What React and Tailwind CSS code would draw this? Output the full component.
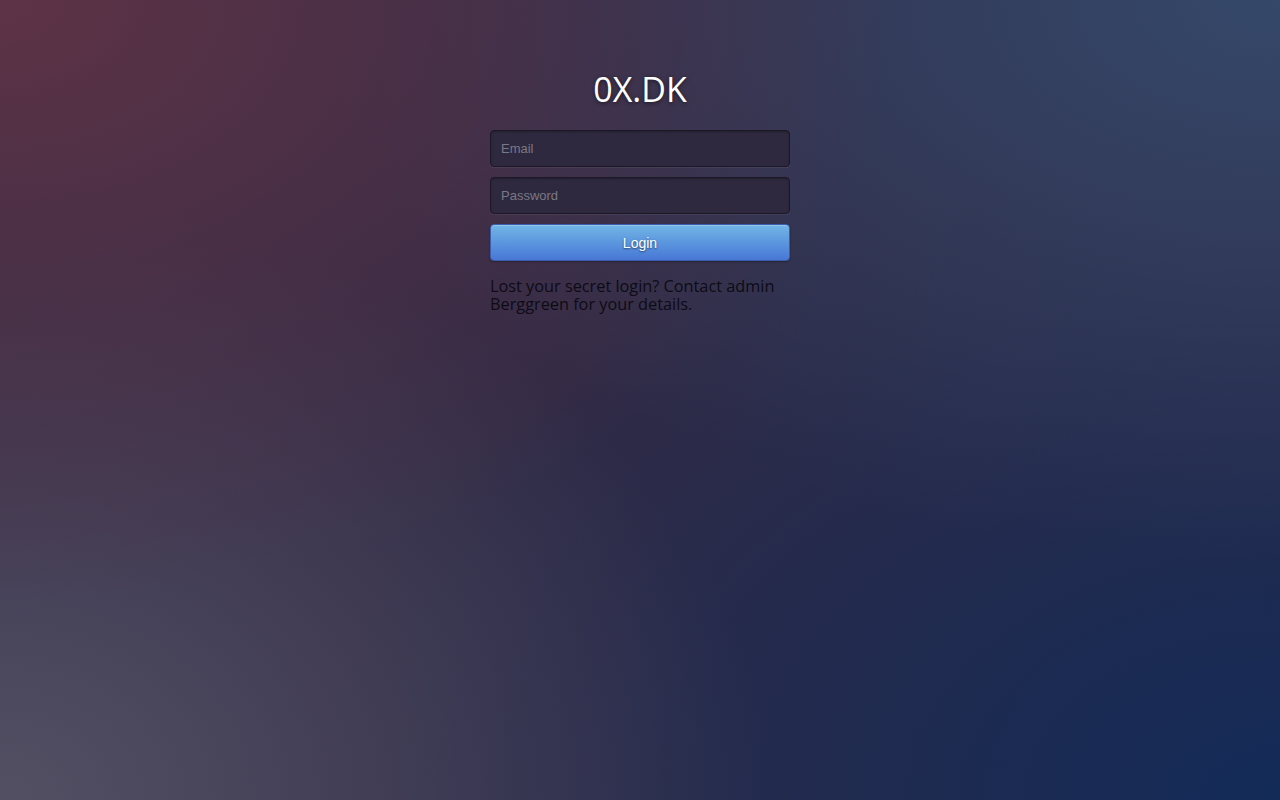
import React from 'react'

// Login screen for 0X.DK
export default function App() {
  return (
    <div className="relative min-h-[800px] w-full overflow-hidden bg-[#302a45] bg-[radial-gradient(ellipse_70%_75%_at_0%_0%,#5e3346_0%,rgba(94,51,70,0)_100%),radial-gradient(ellipse_75%_70%_at_100%_0%,#35486a_0%,rgba(53,72,106,0)_100%),radial-gradient(ellipse_60%_75%_at_0%_100%,#535064_0%,rgba(83,80,100,0)_100%),radial-gradient(ellipse_75%_80%_at_100%_100%,#132b58_0%,rgba(19,43,88,0)_100%)]">
      <div className="mx-auto flex w-[300px] flex-col pt-[68px]">
        <h1 className="text-center font-['Open_Sans',sans-serif] text-[34px] leading-[42px] font-medium text-white [text-shadow:0_1px_4px_rgba(0,0,0,0.6)]">
          0X.DK
        </h1>

        <form className="mt-[20px] flex flex-col gap-[10px]" onSubmit={(e) => e.preventDefault()}>
          <input
            type="email"
            placeholder="Email"
            className="h-[37px] w-full rounded-[4px] border border-[#1c1826] bg-[#2e293e] px-[10px] pb-px font-['Liberation_Sans',Arial,sans-serif] text-[13px] text-white shadow-[inset_0_1px_2px_rgba(0,0,0,0.25),0_1px_0_rgba(255,255,255,0.06)] outline-none placeholder:text-[#7b7885]"
          />
          <input
            type="password"
            placeholder="Password"
            className="h-[37px] w-full rounded-[4px] border border-[#1c1826] bg-[#2e293e] px-[10px] pb-px font-['Liberation_Sans',Arial,sans-serif] text-[13px] text-white shadow-[inset_0_1px_2px_rgba(0,0,0,0.25),0_1px_0_rgba(255,255,255,0.06)] outline-none placeholder:text-[#7b7885]"
          />
          <button
            type="submit"
            className="h-[37px] w-full rounded-[4px] border border-[#3a5ead] bg-gradient-to-b from-[#72b5e6] to-[#4877d5] pt-[2px] font-['Liberation_Sans',Arial,sans-serif] text-[14px] text-white shadow-[inset_0_1px_0_rgba(255,255,255,0.25),0_1px_2px_rgba(0,0,0,0.3)] [text-shadow:0_1px_2px_rgba(0,0,0,0.55)]"
          >
            Login
          </button>
        </form>

        <p className="mt-[16px] font-['Open_Sans',sans-serif] text-[16.3px] leading-[18px] text-[#0d0b14]">
          Lost your secret login? Contact admin Berggreen for your details.
        </p>
      </div>
    </div>
  )
}
